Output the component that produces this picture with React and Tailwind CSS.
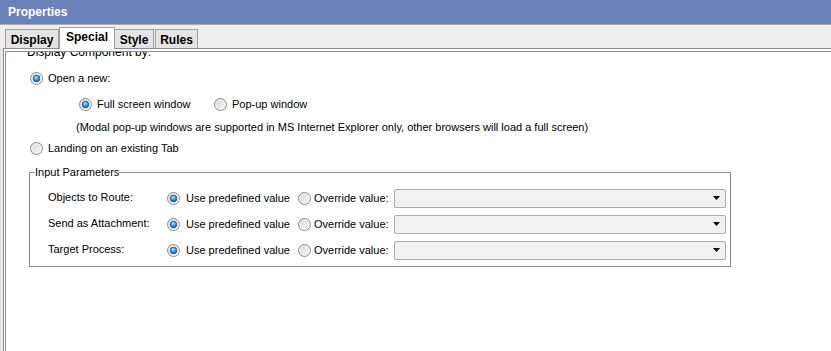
import React from "react";

function Radio({ checked }) {
  return (
    <svg width="13" height="13" viewBox="0 0 13 13" className="shrink-0 block">
      <defs>
        <linearGradient id="rbg" x1="0" y1="0" x2="1" y2="1">
          <stop offset="0" stopColor="#d4d4d4" />
          <stop offset="1" stopColor="#fbfbfb" />
        </linearGradient>
        <radialGradient id="rdot" cx="0.45" cy="0.35" r="0.7">
          <stop offset="0" stopColor="#b6e6fc" />
          <stop offset="0.45" stopColor="#3f9ee0" />
          <stop offset="1" stopColor="#0f4f8c" />
        </radialGradient>
      </defs>
      <circle cx="6.5" cy="6.5" r="6" fill="url(#rbg)" stroke="#8a8c8f" strokeWidth="1" />
      <circle cx="6.5" cy="6.5" r="4.6" fill="none" stroke="#f4f4f4" strokeWidth="0.8" />
      {checked && <circle cx="6.5" cy="6.5" r="3.4" fill="url(#rdot)" stroke="#1b4c7c" strokeWidth="0.6" />}
    </svg>
  );
}

function Select() {
  return (
    <div className="w-[332px] h-[19px] border border-[#abadb3] rounded-[2px] bg-[#f1f1f1] flex items-center justify-end pr-[4px]">
      <svg width="8" height="5" viewBox="0 0 8 5" className="block">
        <path d="M0 0 H7 L3.5 4 Z" fill="#000" />
      </svg>
    </div>
  );
}

function ParamRow({ label }) {
  return (
    <div className="h-[19px] flex items-center">
      <span className="w-[137px] pl-[18px] mb-[3px]">{label}</span>
      <Radio checked />
      <span className="w-[118px] pl-[6px]">Use predefined value</span>
      <Radio />
      <span className="w-[83px] pl-[3px]">Override value:</span>
      <Select />
    </div>
  );
}

export default function App() {
  return (
    <div className="w-[831px] h-[351px] overflow-hidden bg-[#e6e6e6] flex flex-col text-black font-['Liberation_Sans',Arial,sans-serif] text-[11px] leading-[13px]">
      <div className="h-[24px] shrink-0 bg-[#6a82b9] pl-[8px] flex items-center text-white font-bold text-[12px]">
        Properties
      </div>
      <div className="h-[24px] shrink-0 bg-[#efefef] border-t border-[#ababab] flex items-end pl-[5px] relative z-10 text-[12px] font-bold">
        <div className="w-[54px] h-[19px] bg-[#e4e4e4] border border-b-0 border-[#a0a0a0] flex items-center justify-center pt-[2px]">Display</div>
        <div className="w-[56px] h-[22px] -mb-[1px] bg-white border border-b-0 border-[#a0a0a0] flex items-start justify-center pt-[3px]">Special</div>
        <div className="w-[39px] h-[19px] bg-[#e4e4e4] border border-b-0 border-l-0 border-[#a0a0a0] flex items-center justify-center pt-[2px]">Style</div>
        <div className="w-[43px] h-[19px] ml-[1px] bg-[#e4e4e4] border border-b-0 border-[#a0a0a0] flex items-center justify-center pt-[2px]">Rules</div>
      </div>
      <div className="flex-1 ml-[3px] border-t border-l border-[#8a8a98] bg-white pt-[2px] pl-[1px] flex flex-col">
        <div className="flex-1 border-t border-l border-[#8a8a98] overflow-hidden flex flex-col">
          <div className="mt-[-7px] h-[14px] leading-[14px] pl-[21px] text-[12px]">Display Component by:</div>

          <div className="mt-[9px] h-[20px] flex items-center pl-[24px]">
            <Radio checked />
            <span className="pl-[5px]">Open a new:</span>
          </div>

          <div className="mt-[6px] h-[20px] flex items-center pl-[73px]">
            <Radio checked />
            <span className="pl-[5px] w-[122px]">Full screen window</span>
            <Radio />
            <span className="pl-[5px]">Pop-up window</span>
          </div>

          <div className="mt-[3px] h-[20px] flex items-center pl-[70px]">
            (Modal pop-up windows are supported in MS Internet Explorer only, other browsers will load a full screen)
          </div>

          <div className="mt-[1px] h-[20px] flex items-center pl-[24px]">
            <Radio />
            <span className="pl-[5px]">Landing on an existing Tab</span>
          </div>

          <div className="mt-[14px] ml-[23px] w-[702px] h-[95px] border border-[#8c8c8c] relative pt-[16px] flex flex-col gap-[7px]">
            <span className="absolute left-[5px] -top-[7px] bg-white leading-[13px]">Input Parameters</span>
            <ParamRow label="Objects to Route:" />
            <ParamRow label="Send as Attachment:" />
            <ParamRow label="Target Process:" />
          </div>
        </div>
      </div>
    </div>
  );
}
